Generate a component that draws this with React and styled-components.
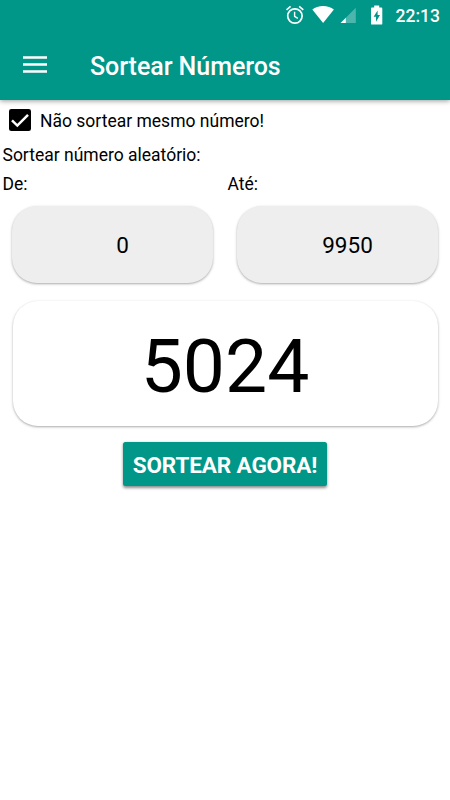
import React from 'react';
import styled, { createGlobalStyle } from 'styled-components';

const teal = '#009688';

const GlobalStyle = createGlobalStyle`
  * {
    box-sizing: border-box;
  }

  body {
    margin: 0;
    background-color: #ffffff;
    color: #000000;
    font-family: Roboto, sans-serif;
    font-size: 17.5px;
  }
`;

const Screen = styled.div`
  width: 450px;
  height: 800px;
  overflow: hidden;
  background-color: #ffffff;
`;

const Header = styled.header`
  height: 100px;
  background-color: ${teal};
  color: #ffffff;
  box-shadow: 0 1px 5px rgba(0, 0, 0, 0.4);
`;

const StatusBar = styled.div`
  display: flex;
  justify-content: flex-end;
  height: 30px;
  padding-right: 10px;
`;

const StatusIcons = styled.svg`
  width: 100px;
  height: 30px;
  margin-right: 10.5px;
`;

const Clock = styled.span`
  width: 44.5px;
  line-height: 32px;
  font-weight: 500;
  white-space: nowrap;
`;

const Toolbar = styled.div`
  display: flex;
  align-items: center;
  height: 70px;
  padding-left: 23px;
`;

const MenuButton = styled.button`
  width: 24px;
  height: 18px;
  margin-right: 43px;
  padding: 0;
  border: none;
  background: none;
  color: inherit;

  svg {
    display: block;
  }
`;

const Title = styled.h1`
  margin: 4px 0 0;
  font-size: 25px;
  font-weight: 500;
  line-height: 30px;
  letter-spacing: -0.05px;
`;

const CheckRow = styled.label`
  display: flex;
  align-items: center;
  height: 40px;
  padding-left: 9px;

  svg {
    margin-right: 9px;
  }
`;

const CheckText = styled.span`
  padding-top: 2px;
`;

const Label = styled.div`
  height: 30px;
  line-height: 30px;
  padding-left: 2.5px;
`;

const Range = styled.div`
  display: grid;
  grid-template-columns: 1fr 1fr;
`;

const FieldLabel = styled.div`
  padding-left: 2.5px;
  line-height: 28px;
`;

const Card = styled.div`
  display: flex;
  align-items: center;
  justify-content: center;
  border-radius: 25px;
  box-shadow: 0 1px 2.5px rgba(0, 0, 0, 0.34);
`;

const FieldCard = styled(Card)`
  height: 77px;
  margin: 8px 12px 0;
  padding-left: 20px;
  background-color: #eeeeee;
  font-size: 22.5px;
`;

const ResultCard = styled(Card)`
  height: 125px;
  margin: 17.5px 12.5px 0;
  padding-top: 6px;
  background-color: #ffffff;
  font-size: 75px;
`;

const DrawButton = styled.button`
  display: block;
  width: 204px;
  height: 44px;
  margin: 16.5px auto 0;
  padding: 2px 0 0;
  border: none;
  border-radius: 2.5px;
  background-color: ${teal};
  color: #ffffff;
  font-family: inherit;
  font-size: 22.5px;
  font-weight: 700;
  letter-spacing: -0.12px;
  white-space: nowrap;
  box-shadow: 0 1.5px 3px rgba(0, 0, 0, 0.45);
`;

const StatusGlyphs = () => (
  <StatusIcons viewBox="285 0 100 30" fill="#ffffff">
    {/* alarm */}
    <g fill="none" stroke="#ffffff">
      <circle cx="294.9" cy="16" r="7.2" strokeWidth="1.7" />
      <path d="M294.6 11.8v4.6l3.2 2" strokeWidth="1.4" />
      <path d="M286.5 9.8l4.1-3.4M299.2 6.4l4.1 3.4" strokeWidth="1.7" />
    </g>
    {/* wifi */}
    <path d="M323.1 23.1L312.3 9.6C315.2 7.4 318.9 6.1 323.1 6.1s7.9 1.3 10.8 3.5z" />
    {/* mobile signal */}
    <path d="M355.8 7.7v15.2h-15.2z" opacity="0.3" />
    <path d="M345.8 17.7v5.2h-5.2z" />
    {/* battery */}
    <path
      fillRule="evenodd"
      d="M374.2 5.6h5v2h2.2q.9 0 .9.9v15.2q0 .9-.9.9h-9.5q-.9 0-.9-.9V8.5q0-.9.9-.9h2.3zM377.6 10.5l-4 6.3h2.4v4.9l4-6.7h-2.4z"
    />
  </StatusIcons>
);

const App = () => (
  <>
    <GlobalStyle />
    <Screen>
      <Header>
        <StatusBar>
          <StatusGlyphs />
          <Clock>22:13</Clock>
        </StatusBar>
        <Toolbar>
          <MenuButton type="button" aria-label="Menu">
            <svg width="24" height="18" viewBox="0 0 24 18" fill="#ffffff">
              <path d="M0 .3h24v2.5H0zM0 7.3h24v2.5H0zM0 14.3h24v2.5H0z" />
            </svg>
          </MenuButton>
          <Title>Sortear Números</Title>
        </Toolbar>
      </Header>
      <main>
        <CheckRow>
          <svg width="22" height="22" viewBox="0 0 22 22">
            <rect width="22" height="22" rx="2.3" fill="#000000" />
            <path
              d="M3 11.4l5.3 5.2L19 5.8"
              fill="none"
              stroke="#ffffff"
              strokeWidth="2.5"
            />
          </svg>
          <CheckText>Não sortear mesmo número!</CheckText>
        </CheckRow>
        <Label>Sortear número aleatório:</Label>
        <Range>
          <div>
            <FieldLabel>De:</FieldLabel>
            <FieldCard>0</FieldCard>
          </div>
          <div>
            <FieldLabel>Até:</FieldLabel>
            <FieldCard>9950</FieldCard>
          </div>
        </Range>
        <ResultCard>5024</ResultCard>
        <DrawButton type="button">SORTEAR AGORA!</DrawButton>
      </main>
    </Screen>
  </>
);

export default App;
